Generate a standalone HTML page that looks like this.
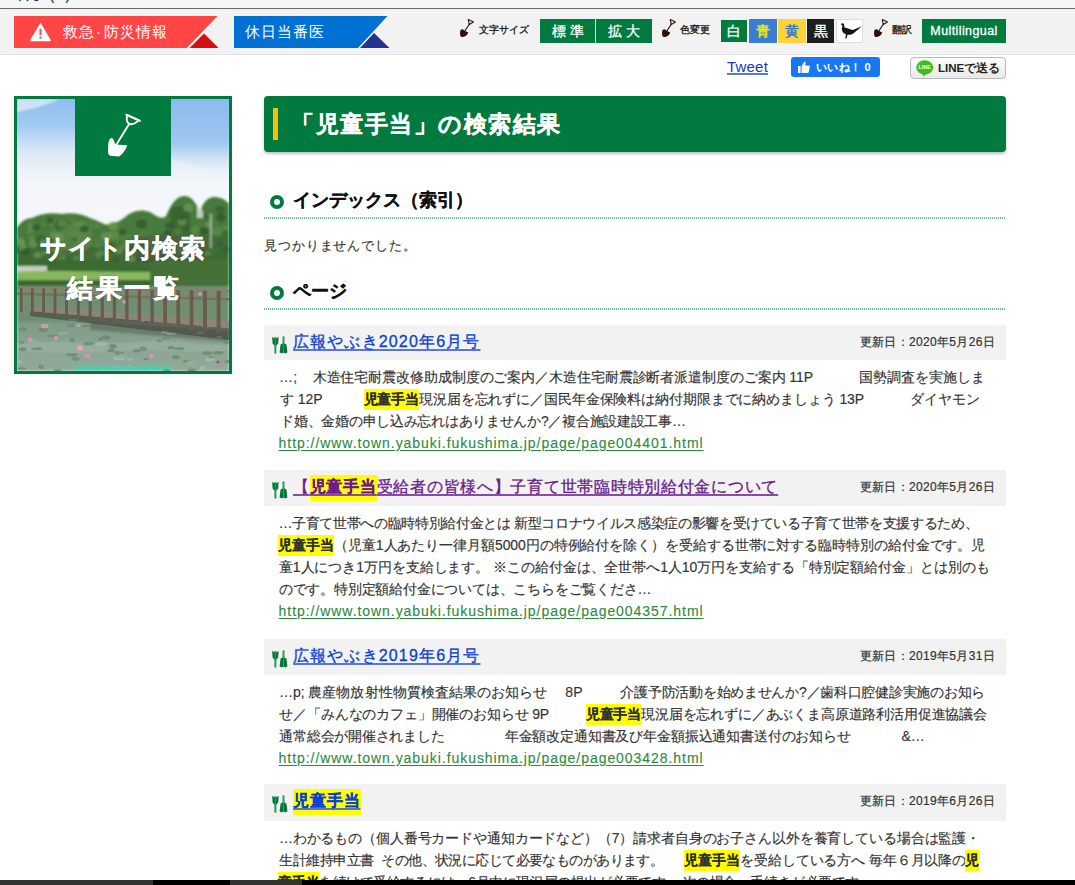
<!DOCTYPE html>
<html lang="ja"><head><meta charset="utf-8"><title>サイト内検索結果一覧</title>
<style>
*{box-sizing:border-box;margin:0;padding:0}
html,body{width:1075px;height:885px;overflow:hidden;background:#fff}
body{position:relative;font-family:"Liberation Sans",sans-serif;color:#333;font-size:14px}
.abs{position:absolute}
#topstrip{left:0;top:0;width:1075px;height:8px;background:#f6f6f6;overflow:hidden}
#topstrip span{position:absolute;left:20px;top:-12px;font-size:14px;color:#1d2a4a;white-space:nowrap}
#topline{left:0;top:8px;width:1075px;height:1px;background:#6a6a6a}
#toolbar{left:0;top:9px;width:1075px;height:46px;background:#f2f2f2;border-bottom:1px solid #dfe1e6}
.band{top:16px;height:32px}
.band .t{position:absolute;top:0;height:32px;line-height:32px;color:#fff;font-size:15px;letter-spacing:1px;white-space:nowrap}
.gbtn{position:absolute;background:#007a3e;color:#fff;text-align:center;white-space:nowrap}
.lbl{position:absolute;top:25px;font-size:10px;color:#111;white-space:nowrap;line-height:10px;-webkit-text-stroke:0.3px #111}
.shv{position:absolute;top:19px;width:15px;height:18px}

#tweet{left:727px;top:58px;font-size:15px;color:#1438d0;text-decoration:underline;text-decoration-color:#5a78d8;text-decoration-thickness:2px;white-space:nowrap;letter-spacing:0.2px}
#fb{left:791px;top:57px;width:89px;height:20px;background:#1877f2;border-radius:3px;color:#fff;font-size:11px;font-weight:bold;white-space:nowrap}
#fb span{position:absolute;left:25px;top:3px;line-height:14px;letter-spacing:0.3px}
#line{left:910px;top:57px;width:96px;height:22px;border:1px solid #b9b9b9;border-radius:4px;background:linear-gradient(#fdfdfd,#e9e9e9);font-size:11.5px;font-weight:bold;color:#222;white-space:nowrap}
#line span{position:absolute;left:27px;top:4px;line-height:13px}

#ttl{left:264px;top:96px;width:742px;height:56px;background:#007a3e;border-radius:4px;box-shadow:0 2px 3px rgba(0,0,0,.25)}
#ttl i{position:absolute;left:9px;top:12px;width:5px;height:32px;background:#fcbf00}
#ttl span{position:absolute;left:27px;top:14px;font-size:23px;line-height:28px;font-weight:bold;color:#fff;white-space:nowrap;letter-spacing:1.5px;-webkit-text-stroke:0.35px #fff}
.h2{position:absolute;left:264px;width:742px;height:30px}
.h2:after{content:"";position:absolute;left:0;bottom:0;width:742px;height:2px;background:repeating-linear-gradient(90deg,#6db494 0 1px,#fff 1px 2px)}
.h2 i{position:absolute;left:6px;top:6px;width:14px;height:14px;border:4px solid #007a3e;border-radius:50%}
.h2 span{position:absolute;left:29px;top:0;font-size:18px;line-height:22px;font-weight:bold;color:#111;white-space:nowrap;-webkit-text-stroke:0.25px #111}

.ih{position:absolute;left:264px;width:742px;background:#f2f2f2}
.ih .ico{position:absolute;left:7px;top:11px}
.it{position:absolute;left:29px;top:6px;font-size:16px;line-height:22px;color:#0b3fd6;text-decoration:underline;text-decoration-color:#5577dd;text-decoration-thickness:2px;text-underline-offset:2px;white-space:nowrap;-webkit-text-stroke:0.3px currentColor}
.it.vis{color:#6a1a8a;text-decoration-color:#8a4aa8}
.it .hl{font-weight:bold;background:#ffff00;padding:3px 0 6px;color:inherit}
.dt{position:absolute;right:11px;top:6px;font-size:12px;line-height:22px;color:#333;white-space:nowrap;letter-spacing:0.33px;-webkit-text-stroke:0.2px #333}
.sl{position:absolute;font-size:14px;line-height:22px;color:#333;white-space:nowrap;-webkit-text-stroke:0.15px #333}
.sl .hl{font-weight:bold;background:#ffff00;color:#222;padding:2px 0 3px}
.lk{color:#2a8a3e;text-decoration:underline;text-underline-offset:2px;-webkit-text-stroke:0.1px #2a8a3e}
</style></head><body>

<div id="topstrip" class="abs"><span style="left:18px">ｱｸｾ</span><span style="left:49px;font-size:16px;top:-14px;letter-spacing:1px">(?)</span></div>
<div id="topline" class="abs"></div>
<div id="toolbar" class="abs"></div>

<!-- red band -->
<svg class="abs" style="left:14px;top:16px" width="206" height="32" viewBox="0 0 206 32">
  <polygon points="0,0 203.5,0 172.8,32 0,32" fill="#ff4545"/>
  <polygon points="190,17.4 204.6,32 175.6,32" fill="#d30f0f"/>
  <polygon points="17,24.4 26.5,8.2 36,24.4" fill="#fff" stroke="#fff" stroke-width="1.6" stroke-linejoin="round"/>
  <rect x="25.5" y="12.8" width="2" height="6.4" fill="#ff4545"/>
  <rect x="25.5" y="20.6" width="2" height="2" fill="#ff4545"/>
</svg>
<div class="abs band" style="left:63px;width:120px"><div class="t" style="left:0">救急<span style="margin:0 2px 0 1px">·</span>防災情報</div></div>

<!-- blue band -->
<svg class="abs" style="left:234px;top:16px" width="158" height="32" viewBox="0 0 158 32">
  <polygon points="0,0 153.5,0 124,32 0,32" fill="#0070d2"/>
  <polygon points="140,17 155.5,32 126,32" fill="#26328f"/>
</svg>
<div class="abs band" style="left:245px;width:100px"><div class="t" style="left:0">休日当番医</div></div>

<!-- shovel icons + labels -->
<svg class="shv" style="left:459px" viewBox="0 0 15 18"><use href="#shovel"/></svg>
<div class="lbl" style="left:479px">文字サイズ</div>
<div class="gbtn" style="left:540px;top:19px;width:55px;height:24px;line-height:24px;font-size:14px;letter-spacing:4px;text-indent:4px;-webkit-text-stroke:0.3px #fff">標準</div>
<div class="gbtn" style="left:596px;top:19px;width:56px;height:24px;line-height:24px;font-size:14px;letter-spacing:4px;text-indent:4px;-webkit-text-stroke:0.3px #fff">拡大</div>
<svg class="shv" style="left:661px" viewBox="0 0 15 18"><use href="#shovel"/></svg>
<div class="lbl" style="left:680px">色変更</div>
<div class="gbtn" style="left:721px;top:20px;width:26px;height:22px;line-height:22px;font-size:14px;-webkit-text-stroke:0.35px currentColor">白</div>
<div class="gbtn" style="left:749px;top:19px;width:28px;height:24px;line-height:24px;font-size:14px;background:#3b7dd1;color:#f4f000;-webkit-text-stroke:0.35px currentColor">青</div>
<div class="gbtn" style="left:778px;top:19px;width:28px;height:24px;line-height:24px;font-size:14px;background:#fdd33a;color:#2f6fc4;-webkit-text-stroke:0.35px currentColor">黄</div>
<div class="gbtn" style="left:807px;top:19px;width:27px;height:24px;line-height:24px;font-size:14px;background:#1e1e1e;color:#fff;-webkit-text-stroke:0.35px currentColor">黒</div>
<div class="abs" style="left:836px;top:19px;width:27px;height:24px;background:#fff;border:1px solid #ddd"></div>
<svg class="abs" style="left:838px;top:22px" width="24" height="18" viewBox="0 0 24 18">
  <path d="M3,2.4 C3.4,1.2 5.2,0.8 6,2.2 C6.4,3.2 6.2,4.5 6.6,5.6 C9,6.2 12.5,7.5 15,8 C18,6.8 21,5.2 24,4.2 C21.5,6.2 18.5,8.5 16,11 C14.5,12.4 11.5,13 9.5,12.8 L8.7,16.2 L7.2,16.4 L8,12.4 C5.5,11.5 3.8,9.5 3.8,7 C3.8,5.6 4.5,4.8 4.3,3.6 C4,3 3.6,2.8 3,2.4 Z" fill="#151515"/>
</svg>
<svg class="shv" style="left:873px" viewBox="0 0 15 18"><use href="#shovel"/></svg>
<div class="lbl" style="left:892px">翻訳</div>
<div class="gbtn" style="left:922px;top:19px;width:84px;height:24px;line-height:24px;font-size:12.5px;letter-spacing:0.4px;-webkit-text-stroke:0.3px #fff">Multilingual</div>

<div id="tweet" class="abs">Tweet</div>
<div id="fb" class="abs">
 <svg style="position:absolute;left:7px;top:4px" width="12" height="12" viewBox="0 0 12 12"><rect x="0" y="5" width="2.6" height="7" fill="#fff"/><path d="M3.6,5.2 L6,1.2 C6.4,0.4 7.6,0.6 7.6,1.6 L7.2,4.4 L10.8,4.4 C11.6,4.4 12,5 11.8,5.8 L10.8,11 C10.6,11.6 10.2,12 9.6,12 L3.6,12 Z" fill="#fff"/></svg>
 <span>いいね！ 0</span></div>
<div id="line" class="abs">
 <svg style="position:absolute;left:5px;top:2px" width="18" height="17" viewBox="0 0 18 17"><ellipse cx="8.7" cy="7.5" rx="8.5" ry="7.2" fill="#3cbf1a"/><path d="M6,13 L7.5,16.5 L10.5,13.5 Z" fill="#3cbf1a"/><text x="8.7" y="9.3" font-size="5.5" font-weight="bold" fill="#fff" text-anchor="middle" font-family="Liberation Sans">LINE</text></svg>
 <span>LINEで送る</span></div>

<!-- side panel -->
<div class="abs" style="left:14px;top:96px;width:218px;height:278px;background:#007a3e;box-shadow:0 0 1px rgba(0,0,0,.2)"></div>
<svg class="abs" style="left:17px;top:99px" width="212" height="272" viewBox="17 99 212 272">
 <defs>
  <linearGradient id="sky" x1="0" y1="0" x2="0" y2="1">
   <stop offset="0" stop-color="#8dbdee"/><stop offset="0.1" stop-color="#a3cbf2"/><stop offset="0.2" stop-color="#dde9f6"/><stop offset="0.3" stop-color="#f3f6fa"/><stop offset="0.6" stop-color="#f6f8fa"/><stop offset="1" stop-color="#e8eef4"/>
  </linearGradient>
  <linearGradient id="skyR" x1="0" y1="0" x2="0" y2="1">
   <stop offset="0" stop-color="#8bbbee" stop-opacity="1"/><stop offset="0.6" stop-color="#9cc6f0" stop-opacity=".9"/><stop offset="1" stop-color="#c9def4" stop-opacity="0"/>
  </linearGradient>
  <linearGradient id="pond" x1="0" y1="0" x2="0" y2="1">
   <stop offset="0" stop-color="#7f9c86"/><stop offset="1" stop-color="#93aa9b"/>
  </linearGradient>
  <filter id="bl" x="-10%" y="-10%" width="120%" height="120%"><feGaussianBlur stdDeviation="1.3"/></filter>
  <pattern id="dash" x="75" y="0" width="9.6" height="10" patternUnits="userSpaceOnUse"><rect width="8" height="10" fill="#22dfb8"/><rect x="8" width="1.6" height="10" fill="#7fc0a8"/></pattern>
  <filter id="bl2"><feGaussianBlur stdDeviation="0.55"/></filter>
 </defs>
 <rect x="17" y="99" width="212" height="272" fill="url(#sky)"/>
 <g filter="url(#bl)">
  <path d="M150,99 L229,99 L229,172 C200,168 170,160 150,150 Z" fill="url(#skyR)"/>
  <path d="M17,99 L60,99 C50,104 30,110 17,112 Z" fill="#dfeaf6" opacity=".8"/>
  <!-- trees -->
  <path d="M17,228 C20,222 26,218 32,218 C40,214 50,212 62,214 C72,212 82,214 90,218 C96,220 100,222 104,224 C110,226 118,222 124,218 C130,212 140,208 150,212 C156,216 162,220 166,216 C170,206 176,196 184,196 C192,196 196,204 200,210 C204,202 208,196 216,197 C222,198 226,200 229,204 L229,371 L17,371 Z" fill="#4a7a3d"/>
  <path d="M17,240 C30,236 40,244 50,242 C70,240 90,250 110,246 C130,242 150,236 170,232 C190,228 210,232 229,230 L229,371 L17,371 Z" fill="#3f6c36"/>
  <path d="M60,224 C70,218 84,220 90,230 C94,238 92,246 86,250 L60,250 Z" fill="#5e8c49" opacity=".7"/>
  <path d="M170,210 C176,204 186,204 190,214 L190,232 L170,232 Z" fill="#365f30" opacity=".8"/>
  <g><ellipse cx="112.9" cy="245.9" rx="5.7" ry="4.6" fill="#385f31" opacity=".75"/><ellipse cx="112.8" cy="256.7" rx="3.2" ry="2.5" fill="#557f45" opacity=".75"/><ellipse cx="117.9" cy="247.3" rx="3.2" ry="2.5" fill="#385f31" opacity=".75"/><ellipse cx="81.3" cy="224.5" rx="5.3" ry="4.3" fill="#5f8f4b" opacity=".75"/><ellipse cx="143.2" cy="235.2" rx="4.1" ry="3.3" fill="#557f45" opacity=".75"/><ellipse cx="154.8" cy="245.1" rx="5.4" ry="4.3" fill="#5f8f4b" opacity=".75"/><ellipse cx="29.6" cy="230.9" rx="3.3" ry="2.7" fill="#5f8f4b" opacity=".75"/><ellipse cx="182.0" cy="221.8" rx="4.6" ry="3.7" fill="#6a9852" opacity=".75"/><ellipse cx="127.1" cy="247.4" rx="4.2" ry="3.4" fill="#5f8f4b" opacity=".75"/><ellipse cx="114.0" cy="235.3" rx="6.0" ry="4.8" fill="#5f8f4b" opacity=".75"/><ellipse cx="167.1" cy="232.4" rx="3.3" ry="2.6" fill="#2e5629" opacity=".75"/><ellipse cx="23.3" cy="247.1" rx="2.9" ry="2.3" fill="#5f8f4b" opacity=".75"/><ellipse cx="196.5" cy="230.7" rx="5.9" ry="4.7" fill="#5f8f4b" opacity=".75"/><ellipse cx="62.3" cy="258.8" rx="2.7" ry="2.1" fill="#385f31" opacity=".75"/><ellipse cx="224.8" cy="228.1" rx="2.8" ry="2.2" fill="#6a9852" opacity=".75"/><ellipse cx="182.0" cy="218.3" rx="2.8" ry="2.2" fill="#2e5629" opacity=".75"/><ellipse cx="20.2" cy="243.0" rx="5.7" ry="4.6" fill="#6a9852" opacity=".75"/><ellipse cx="69.2" cy="223.4" rx="2.7" ry="2.2" fill="#385f31" opacity=".75"/><ellipse cx="54.7" cy="243.0" rx="4.1" ry="3.3" fill="#6a9852" opacity=".75"/><ellipse cx="225.9" cy="249.2" rx="4.0" ry="3.2" fill="#385f31" opacity=".75"/><ellipse cx="41.7" cy="238.1" rx="3.2" ry="2.6" fill="#2e5629" opacity=".75"/><ellipse cx="200.2" cy="260.8" rx="4.6" ry="3.7" fill="#5f8f4b" opacity=".75"/><ellipse cx="61.7" cy="235.4" rx="5.5" ry="4.4" fill="#557f45" opacity=".75"/><ellipse cx="38.3" cy="261.6" rx="3.2" ry="2.6" fill="#2e5629" opacity=".75"/><ellipse cx="19.0" cy="249.8" rx="5.4" ry="4.3" fill="#385f31" opacity=".75"/><ellipse cx="32.6" cy="225.5" rx="4.5" ry="3.6" fill="#6a9852" opacity=".75"/><ellipse cx="20.3" cy="241.7" rx="4.7" ry="3.7" fill="#6a9852" opacity=".75"/><ellipse cx="220.3" cy="231.7" rx="4.5" ry="3.6" fill="#385f31" opacity=".75"/><ellipse cx="55.8" cy="225.5" rx="5.7" ry="4.5" fill="#557f45" opacity=".75"/><ellipse cx="69.9" cy="227.3" rx="5.1" ry="4.1" fill="#557f45" opacity=".75"/><ellipse cx="58.7" cy="259.8" rx="5.6" ry="4.5" fill="#557f45" opacity=".75"/><ellipse cx="33.6" cy="223.7" rx="2.9" ry="2.3" fill="#557f45" opacity=".75"/><ellipse cx="221.1" cy="217.6" rx="5.0" ry="4.0" fill="#2e5629" opacity=".75"/><ellipse cx="106.2" cy="258.7" rx="4.2" ry="3.4" fill="#557f45" opacity=".75"/><ellipse cx="54.2" cy="250.0" rx="2.7" ry="2.2" fill="#6a9852" opacity=".75"/><ellipse cx="118.6" cy="248.7" rx="4.7" ry="3.7" fill="#5f8f4b" opacity=".75"/><ellipse cx="76.4" cy="258.5" rx="3.2" ry="2.6" fill="#5f8f4b" opacity=".75"/><ellipse cx="31.7" cy="238.6" rx="3.4" ry="2.7" fill="#5f8f4b" opacity=".75"/><ellipse cx="54.4" cy="234.9" rx="4.5" ry="3.6" fill="#6a9852" opacity=".75"/><ellipse cx="36.5" cy="227.0" rx="4.1" ry="3.3" fill="#2e5629" opacity=".75"/><ellipse cx="156.3" cy="248.3" rx="4.5" ry="3.6" fill="#6a9852" opacity=".75"/><ellipse cx="142.1" cy="258.6" rx="4.2" ry="3.3" fill="#2e5629" opacity=".75"/><ellipse cx="165.6" cy="260.4" rx="2.6" ry="2.1" fill="#5f8f4b" opacity=".75"/><ellipse cx="119.2" cy="251.6" rx="3.6" ry="2.9" fill="#5f8f4b" opacity=".75"/><ellipse cx="33.0" cy="243.8" rx="5.1" ry="4.1" fill="#6a9852" opacity=".75"/><ellipse cx="185.2" cy="256.8" rx="3.7" ry="3.0" fill="#385f31" opacity=".75"/><ellipse cx="208.0" cy="255.0" rx="4.0" ry="3.2" fill="#5f8f4b" opacity=".75"/><ellipse cx="200.1" cy="241.5" rx="4.7" ry="3.7" fill="#385f31" opacity=".75"/><ellipse cx="97.4" cy="225.6" rx="2.8" ry="2.2" fill="#5f8f4b" opacity=".75"/><ellipse cx="152.6" cy="261.7" rx="5.6" ry="4.5" fill="#2e5629" opacity=".75"/><ellipse cx="99.3" cy="252.5" rx="4.5" ry="3.6" fill="#385f31" opacity=".75"/><ellipse cx="115.1" cy="244.9" rx="4.3" ry="3.5" fill="#557f45" opacity=".75"/><ellipse cx="23.3" cy="248.4" rx="4.2" ry="3.3" fill="#6a9852" opacity=".75"/><ellipse cx="220.0" cy="209.8" rx="5.2" ry="4.2" fill="#385f31" opacity=".75"/><ellipse cx="71.2" cy="219.8" rx="3.6" ry="2.8" fill="#557f45" opacity=".75"/><ellipse cx="59.9" cy="225.7" rx="5.7" ry="4.5" fill="#385f31" opacity=".75"/><ellipse cx="122.6" cy="232.0" rx="3.9" ry="3.1" fill="#2e5629" opacity=".75"/><ellipse cx="59.1" cy="237.2" rx="5.3" ry="4.3" fill="#6a9852" opacity=".75"/><ellipse cx="203.6" cy="230.6" rx="4.5" ry="3.6" fill="#2e5629" opacity=".75"/><ellipse cx="61.5" cy="224.0" rx="3.7" ry="3.0" fill="#5f8f4b" opacity=".75"/><ellipse cx="167.8" cy="259.8" rx="3.5" ry="2.8" fill="#6a9852" opacity=".75"/><ellipse cx="40.9" cy="240.2" rx="5.7" ry="4.6" fill="#385f31" opacity=".75"/><ellipse cx="98.1" cy="244.5" rx="4.9" ry="3.9" fill="#557f45" opacity=".75"/><ellipse cx="112.9" cy="228.1" rx="2.6" ry="2.1" fill="#557f45" opacity=".75"/><ellipse cx="25.8" cy="251.6" rx="4.5" ry="3.6" fill="#2e5629" opacity=".75"/><ellipse cx="154.6" cy="242.5" rx="4.7" ry="3.8" fill="#385f31" opacity=".75"/><ellipse cx="113.4" cy="226.1" rx="5.4" ry="4.3" fill="#6a9852" opacity=".75"/><ellipse cx="182.2" cy="249.8" rx="5.9" ry="4.8" fill="#5f8f4b" opacity=".75"/><ellipse cx="111.7" cy="248.6" rx="4.8" ry="3.8" fill="#2e5629" opacity=".75"/><ellipse cx="220.2" cy="243.5" rx="3.2" ry="2.6" fill="#385f31" opacity=".75"/><ellipse cx="71.3" cy="249.8" rx="5.1" ry="4.1" fill="#557f45" opacity=".75"/><ellipse cx="168.4" cy="225.3" rx="3.5" ry="2.8" fill="#2e5629" opacity=".75"/><ellipse cx="131.4" cy="259.8" rx="4.3" ry="3.4" fill="#6a9852" opacity=".75"/><ellipse cx="100.4" cy="254.6" rx="5.7" ry="4.5" fill="#5f8f4b" opacity=".75"/><ellipse cx="104.0" cy="258.3" rx="3.9" ry="3.1" fill="#385f31" opacity=".75"/><ellipse cx="113.1" cy="248.2" rx="5.7" ry="4.5" fill="#385f31" opacity=".75"/><ellipse cx="133.6" cy="247.3" rx="4.3" ry="3.4" fill="#2e5629" opacity=".75"/><ellipse cx="115.3" cy="249.0" rx="3.2" ry="2.6" fill="#5f8f4b" opacity=".75"/><ellipse cx="62.2" cy="257.6" rx="5.9" ry="4.7" fill="#2e5629" opacity=".75"/><ellipse cx="130.8" cy="253.3" rx="3.6" ry="2.9" fill="#5f8f4b" opacity=".75"/><ellipse cx="90.9" cy="225.7" rx="4.0" ry="3.2" fill="#557f45" opacity=".75"/><ellipse cx="106.3" cy="236.8" rx="5.7" ry="4.6" fill="#6a9852" opacity=".75"/><ellipse cx="188.5" cy="207.7" rx="5.3" ry="4.2" fill="#6a9852" opacity=".75"/><ellipse cx="130.0" cy="249.0" rx="5.7" ry="4.6" fill="#385f31" opacity=".75"/><ellipse cx="48.5" cy="241.6" rx="5.0" ry="4.0" fill="#385f31" opacity=".75"/><ellipse cx="217.5" cy="231.5" rx="5.8" ry="4.7" fill="#5f8f4b" opacity=".75"/><ellipse cx="177.7" cy="231.2" rx="4.5" ry="3.6" fill="#557f45" opacity=".75"/><ellipse cx="152.4" cy="240.3" rx="5.5" ry="4.4" fill="#557f45" opacity=".75"/><ellipse cx="71.4" cy="248.0" rx="5.8" ry="4.7" fill="#557f45" opacity=".75"/><ellipse cx="61.1" cy="255.5" rx="5.9" ry="4.7" fill="#557f45" opacity=".75"/><ellipse cx="74.9" cy="240.8" rx="3.9" ry="3.2" fill="#5f8f4b" opacity=".75"/><ellipse cx="123.7" cy="246.2" rx="2.6" ry="2.1" fill="#5f8f4b" opacity=".75"/><ellipse cx="126.4" cy="237.7" rx="5.3" ry="4.2" fill="#557f45" opacity=".75"/><ellipse cx="42.8" cy="224.4" rx="3.1" ry="2.5" fill="#557f45" opacity=".75"/><ellipse cx="114.3" cy="259.1" rx="5.3" ry="4.2" fill="#385f31" opacity=".75"/><ellipse cx="74.1" cy="239.7" rx="2.9" ry="2.4" fill="#385f31" opacity=".75"/><ellipse cx="208.0" cy="258.5" rx="5.7" ry="4.6" fill="#557f45" opacity=".75"/><ellipse cx="84.2" cy="229.0" rx="4.7" ry="3.7" fill="#2e5629" opacity=".75"/><ellipse cx="44.4" cy="252.8" rx="2.6" ry="2.1" fill="#6a9852" opacity=".75"/><ellipse cx="50.0" cy="220.1" rx="3.5" ry="2.8" fill="#2e5629" opacity=".75"/><ellipse cx="68.8" cy="240.4" rx="4.2" ry="3.4" fill="#557f45" opacity=".75"/><ellipse cx="43.0" cy="241.7" rx="3.4" ry="2.7" fill="#6a9852" opacity=".75"/><ellipse cx="165.7" cy="256.9" rx="2.6" ry="2.1" fill="#385f31" opacity=".75"/><ellipse cx="191.9" cy="240.8" rx="4.4" ry="3.5" fill="#557f45" opacity=".75"/><ellipse cx="152.4" cy="240.6" rx="5.5" ry="4.4" fill="#557f45" opacity=".75"/><ellipse cx="141.4" cy="224.0" rx="5.7" ry="4.6" fill="#2e5629" opacity=".75"/><ellipse cx="208.4" cy="224.5" rx="3.6" ry="2.9" fill="#6a9852" opacity=".75"/><ellipse cx="63.2" cy="261.9" rx="5.6" ry="4.5" fill="#6a9852" opacity=".75"/><ellipse cx="205.5" cy="216.5" rx="2.8" ry="2.2" fill="#385f31" opacity=".75"/><ellipse cx="37.6" cy="255.2" rx="4.0" ry="3.2" fill="#6a9852" opacity=".75"/></g>
  <path d="M197,200 C199,204 201,208 203,212 L203,218 L197,218 Z" fill="#eef3f6" opacity=".7"/>
  <rect x="210" y="214" width="1.6" height="34" fill="#c9cfc6" opacity=".8"/>
  <rect x="135" y="236" width="70" height="26" fill="#4c5450" opacity=".55"/>
  <path d="M17,258 C40,256 80,262 120,262 C160,262 200,256 229,254 L229,371 L17,371 Z" fill="#3b6a32"/>
  <rect x="17" y="266" width="30" height="6" fill="#c8ccbf"/>
  <path d="M17,272 C50,270 100,272 150,272 L150,280 L17,280 Z" fill="#86b85c"/>
  <path d="M17,280 L229,280 L229,286 L17,286 Z" fill="#3e6636"/>
  <path d="M150,262 C180,258 210,262 229,258 L229,286 L150,286 Z" fill="#446f38"/>
  <path d="M17,286 L229,286 L229,330 L17,330 Z" fill="#6f8f6f"/>
  <!-- pond -->
  <rect x="17" y="322" width="212" height="49" fill="url(#pond)"/>
  <path d="M17,344 C60,338 100,346 140,342 C180,338 210,348 229,344 L229,350 C190,354 150,348 110,352 C70,356 40,350 17,352 Z" fill="#a0b6a9" opacity=".55"/>
  <path d="M90,322 L229,330 L229,342 L90,330 Z" fill="#3c3a36" opacity=".35"/>
 </g>
 <g filter="url(#bl2)">
  <g opacity=".8"><ellipse cx="85.7" cy="326.0" rx="4.6" ry="1.1" fill="#6b8a66"/><ellipse cx="37.0" cy="348.9" rx="5.6" ry="1.3" fill="#6f8c78"/><ellipse cx="108.9" cy="321.7" rx="2.4" ry="1.6" fill="#6b8a66"/><ellipse cx="43.2" cy="329.8" rx="4.5" ry="2.4" fill="#6b8a66"/><ellipse cx="141.1" cy="320.6" rx="2.9" ry="1.8" fill="#a7bbb0"/><ellipse cx="78.4" cy="325.6" rx="2.5" ry="1.5" fill="#a7bbb0"/><ellipse cx="38.8" cy="348.3" rx="2.8" ry="1.1" fill="#6f8c78"/><ellipse cx="136.6" cy="350.8" rx="4.0" ry="1.8" fill="#6d8a74"/><ellipse cx="115.7" cy="366.9" rx="3.4" ry="1.4" fill="#a7bbb0"/><ellipse cx="165.2" cy="330.9" rx="4.3" ry="1.8" fill="#6d8a74"/><ellipse cx="171.6" cy="333.3" rx="5.9" ry="1.2" fill="#98ae9f"/><ellipse cx="52.0" cy="336.1" rx="5.7" ry="1.6" fill="#6f8c78"/><ellipse cx="179.1" cy="348.4" rx="5.5" ry="1.5" fill="#6d8a74"/><ellipse cx="143.0" cy="348.7" rx="3.8" ry="2.3" fill="#6d8a74"/><ellipse cx="117.5" cy="353.2" rx="2.2" ry="2.1" fill="#6b8a66"/><ellipse cx="227.5" cy="361.6" rx="3.1" ry="1.6" fill="#6d8a74"/><ellipse cx="21.8" cy="342.5" rx="2.7" ry="1.2" fill="#6f8c78"/><ellipse cx="63.3" cy="333.2" rx="5.0" ry="1.6" fill="#98ae9f"/><ellipse cx="34.1" cy="341.8" rx="4.2" ry="2.3" fill="#98ae9f"/><ellipse cx="200.2" cy="332.8" rx="3.7" ry="1.5" fill="#98ae9f"/><ellipse cx="220.0" cy="326.0" rx="2.7" ry="1.3" fill="#a7bbb0"/><ellipse cx="19.6" cy="362.0" rx="2.7" ry="1.4" fill="#a7bbb0"/><ellipse cx="105.8" cy="337.6" rx="4.3" ry="2.4" fill="#6b8a66"/><ellipse cx="218.4" cy="352.7" rx="5.0" ry="1.7" fill="#6b8a66"/><ellipse cx="100.2" cy="339.1" rx="2.4" ry="2.0" fill="#6f8c78"/><ellipse cx="57.4" cy="370.2" rx="3.8" ry="1.2" fill="#6b8a66"/><ellipse cx="28.1" cy="318.0" rx="2.6" ry="1.2" fill="#6d8a74"/><ellipse cx="147.1" cy="321.7" rx="2.8" ry="1.6" fill="#6d8a74"/><ellipse cx="219.6" cy="349.9" rx="3.9" ry="1.2" fill="#98ae9f"/><ellipse cx="227.5" cy="342.7" rx="3.9" ry="1.1" fill="#6f8c78"/><ellipse cx="175.9" cy="357.2" rx="3.9" ry="2.0" fill="#6b8a66"/><ellipse cx="21.9" cy="368.4" rx="4.1" ry="1.2" fill="#6b8a66"/><ellipse cx="210.8" cy="358.2" rx="3.2" ry="2.0" fill="#6f8c78"/><ellipse cx="164.6" cy="331.8" rx="3.5" ry="1.3" fill="#a7bbb0"/><ellipse cx="129.9" cy="359.3" rx="3.3" ry="1.3" fill="#a7bbb0"/><ellipse cx="187.9" cy="361.4" rx="5.0" ry="1.3" fill="#6b8a66"/><ellipse cx="121.5" cy="356.7" rx="6.0" ry="2.2" fill="#98ae9f"/><ellipse cx="71.9" cy="354.7" rx="5.8" ry="1.7" fill="#6d8a74"/><ellipse cx="219.5" cy="337.3" rx="2.9" ry="1.3" fill="#a7bbb0"/><ellipse cx="88.6" cy="343.6" rx="5.9" ry="1.9" fill="#6f8c78"/><ellipse cx="118.6" cy="352.6" rx="5.2" ry="1.1" fill="#6f8c78"/><ellipse cx="209.9" cy="359.5" rx="5.0" ry="1.7" fill="#a7bbb0"/><ellipse cx="109.0" cy="351.7" rx="2.3" ry="2.4" fill="#98ae9f"/><ellipse cx="115.2" cy="357.4" rx="2.3" ry="1.2" fill="#a7bbb0"/><ellipse cx="22.8" cy="349.3" rx="3.9" ry="2.0" fill="#6b8a66"/><ellipse cx="192.2" cy="370.0" rx="4.6" ry="1.5" fill="#6b8a66"/><ellipse cx="133.2" cy="319.1" rx="5.2" ry="2.1" fill="#6f8c78"/><ellipse cx="128.6" cy="367.5" rx="3.7" ry="2.3" fill="#a7bbb0"/><ellipse cx="22.9" cy="329.3" rx="4.0" ry="2.1" fill="#6d8a74"/><ellipse cx="72.0" cy="340.2" rx="2.5" ry="2.4" fill="#6d8a74"/><ellipse cx="207.3" cy="353.1" rx="5.3" ry="1.8" fill="#6b8a66"/><ellipse cx="44.7" cy="326.0" rx="4.0" ry="2.3" fill="#a7bbb0"/><ellipse cx="146.0" cy="359.1" rx="2.6" ry="1.2" fill="#6b8a66"/><ellipse cx="170.7" cy="347.5" rx="3.3" ry="1.8" fill="#6b8a66"/><ellipse cx="119.3" cy="359.2" rx="5.5" ry="1.1" fill="#a7bbb0"/><ellipse cx="75.7" cy="358.9" rx="4.0" ry="1.8" fill="#6f8c78"/><ellipse cx="111.0" cy="350.5" rx="4.0" ry="1.8" fill="#6d8a74"/><ellipse cx="112.9" cy="346.3" rx="3.9" ry="2.4" fill="#6b8a66"/><ellipse cx="202.8" cy="367.9" rx="3.0" ry="1.8" fill="#a7bbb0"/><ellipse cx="195.1" cy="325.3" rx="2.5" ry="1.7" fill="#6f8c78"/><ellipse cx="159.3" cy="340.7" rx="2.9" ry="1.5" fill="#6f8c78"/><ellipse cx="207.2" cy="326.2" rx="4.9" ry="2.0" fill="#a7bbb0"/><ellipse cx="70.7" cy="325.3" rx="3.9" ry="2.1" fill="#6f8c78"/><ellipse cx="101.4" cy="343.8" rx="6.0" ry="2.2" fill="#a7bbb0"/><ellipse cx="166.7" cy="370.7" rx="3.6" ry="1.6" fill="#6d8a74"/><ellipse cx="84.5" cy="356.3" rx="2.1" ry="1.8" fill="#98ae9f"/><ellipse cx="166.1" cy="338.4" rx="4.1" ry="1.4" fill="#6f8c78"/><ellipse cx="40.9" cy="366.7" rx="2.9" ry="2.3" fill="#6f8c78"/><ellipse cx="73.3" cy="320.1" rx="5.1" ry="1.4" fill="#a7bbb0"/><ellipse cx="190.8" cy="363.0" rx="4.7" ry="2.4" fill="#98ae9f"/></g>
  <path d="M30,311 L229,328 L229,340 L30,316 Z" fill="#3e3c37" opacity=".55"/>
  <path d="M17,287 L229,290 L229,292.6 L17,289.6 Z" fill="#8f7d6a"/>
  <path d="M17,292.5 L229,298 L229,300.6 L17,295.1 Z" fill="#7f6e5d"/>
  <path d="M30,305.5 L229,321 L229,328 L30,311 Z" fill="#8b8478"/>
  <g fill="#6a5b4e"><rect x="20.0" y="288.0" width="2.6" height="24.3"/><rect x="31.0" y="288.2" width="2.7" height="25.3"/><rect x="42.2" y="288.4" width="2.8" height="26.3"/><rect x="53.6" y="288.5" width="2.8" height="27.3"/><rect x="65.1" y="288.7" width="2.9" height="28.3"/><rect x="76.8" y="288.8" width="3.0" height="29.4"/><rect x="88.6" y="289.0" width="3.1" height="30.4"/><rect x="100.7" y="289.2" width="3.2" height="31.5"/><rect x="112.8" y="289.4" width="3.2" height="32.6"/><rect x="125.2" y="289.5" width="3.3" height="33.7"/><rect x="137.7" y="289.7" width="3.4" height="34.8"/><rect x="150.4" y="289.9" width="3.5" height="36.0"/><rect x="163.3" y="290.1" width="3.6" height="37.1"/><rect x="176.4" y="290.3" width="3.7" height="38.3"/><rect x="189.7" y="290.4" width="3.7" height="39.5"/><rect x="203.1" y="290.6" width="3.8" height="40.7"/><rect x="216.7" y="290.8" width="3.9" height="41.9"/></g>
  <circle cx="30" cy="340" r="2.4" fill="#e58fb0"/><circle cx="44" cy="326" r="2" fill="#e58fb0"/><circle cx="56" cy="338" r="2" fill="#e58fb0"/>
  <circle cx="80" cy="348" r="2.8" fill="#e9a2bc"/><circle cx="88" cy="356" r="2.2" fill="#e58fb0"/><circle cx="124" cy="302" r="1.8" fill="#e58fb0"/>
  <circle cx="152" cy="356" r="2" fill="#e58fb0"/><circle cx="200" cy="294" r="1.8" fill="#e58fb0"/><circle cx="218" cy="362" r="1.6" fill="#c04060"/>
  <rect x="75" y="366.5" width="97" height="2.5" fill="url(#dash)"/>
 </g>
 <rect x="75" y="99" width="96" height="77" fill="#007a3e"/>
 <path d="M110.6,138.2 C111.6,137.6 112.6,138 113.2,139 L115.6,144.6 L127.2,145.2 C125.8,149.8 122.4,154.2 119,156.4 L110.2,155.8 C108.5,155.2 107.9,153.2 108,151 L108.3,143.5 C108.6,141.2 109.4,139.2 110.6,138.2 Z" fill="#fff"/>
 <path d="M115.6,146 L129.4,123.6" stroke="#fff" stroke-width="1.9" fill="none"/>
 <path d="M126.4,114.8 L139.8,120.8" stroke="#fff" stroke-width="2.2" fill="none" stroke-linecap="round"/>
 <path d="M127.4,115.6 C125.4,119.4 127.2,123.6 130.4,124.2 C133.6,124.6 136.6,122.4 138.6,120.4" stroke="#fff" stroke-width="1.9" fill="none"/>
</svg>
<div class="abs" style="left:17px;top:228px;width:212px;text-align:center;color:#fff;font-weight:bold;font-size:26px;line-height:40px;letter-spacing:1.2px;-webkit-text-stroke:0.5px #fff;text-shadow:0 0 2px rgba(0,0,0,.25);white-space:nowrap">サイト内検索<br><span style="letter-spacing:2.4px;margin-left:2.4px">結果一覧</span></div>

<div id="ttl" class="abs"><i></i><span>「児童手当」の検索結果</span></div>
<div class="h2" style="top:189px;height:30px"><i></i><span>インデックス（索引）</span></div>
<div class="abs" style="left:264px;top:237px;font-size:13px;line-height:18px;color:#333;white-space:nowrap;letter-spacing:0.9px;-webkit-text-stroke:0.15px #333">見つかりませんでした。</div>
<div class="h2" style="top:280px"><i></i><span>ページ</span></div>

<!--ITEMS-->
<div class="ih" style="top:325px;height:35px"><svg class="ico" width="17" height="18" viewBox="0 0 17 18"><use href="#ico"/></svg><a class="it" id="t0" style="letter-spacing:1.154px">広報やぶき2020年6月号</a><span class="dt">更新日：2020年5月26日</span></div>
<div class="sl" id="s0" style="left:279.1px;top:365.7px;letter-spacing:0.205px">…;</div>
<div class="sl" id="s1" style="left:312.6px;top:365.7px;letter-spacing:-0.089px">木造住宅耐震改修助成制度のご案内／木造住宅耐震診断者派遣制度のご案内 11P</div>
<div class="sl" id="s2" style="left:859.4px;top:365.7px;letter-spacing:-0.100px">国勢調査を実施しま</div>
<div class="sl" id="s3" style="left:279.8px;top:387.8px;letter-spacing:-0.022px">す 12P</div>
<div class="sl" id="s4" style="left:363.5px;top:387.8px;letter-spacing:-0.113px"><b class="hl">児童手当</b>現況届を忘れずに／国民年金保険料は納付期限までに納めましょう 13P</div>
<div class="sl" id="s5" style="left:909.9px;top:387.8px;letter-spacing:0.020px">ダイヤモン</div>
<div class="sl" id="s6" style="left:280.3px;top:409.9px;letter-spacing:-0.283px">ド婚、金婚の申し込み忘れはありませんか?／複合施設建設工事…</div>
<div class="sl lk" id="l0" style="left:278.6px;top:432.0px;letter-spacing:0.946px">http://www.town.yabuki.fukushima.jp/page/page004401.html</div>
<div class="ih" style="top:470px;height:36px"><svg class="ico" width="17" height="18" viewBox="0 0 17 18"><use href="#ico"/></svg><a class="it vis" id="t1" style="letter-spacing:0.728px">【<b class="hl">児童手当</b>受給者の皆様へ】子育て世帯臨時特別給付金について</a><span class="dt">更新日：2020年5月26日</span></div>
<div class="sl" id="s7" style="left:278.4px;top:511.7px;letter-spacing:-0.346px">…子育て世帯への臨時特別給付金とは 新型コロナウイルス感染症の影響を受けている子育て世帯を支援するため、</div>
<div class="sl" id="s8" style="left:278.4px;top:533.8px;letter-spacing:-0.078px"><b class="hl">児童手当</b>（児童1人あたり一律月額5000円の特例給付を除く）を受給する世帯に対する臨時特別の給付金です。児</div>
<div class="sl" id="s9" style="left:278.9px;top:555.9px;letter-spacing:-0.076px">童1人につき1万円を支給します。 ※この給付金は、全世帯へ1人10万円を支給する「特別定額給付金」とは別のも</div>
<div class="sl" id="s10" style="left:278.9px;top:578.0px;letter-spacing:-0.207px">のです。特別定額給付金については、こちらをご覧くださ…</div>
<div class="sl lk" id="l1" style="left:278.6px;top:600.1px;letter-spacing:0.946px">http://www.town.yabuki.fukushima.jp/page/page004357.html</div>
<div class="ih" style="top:639px;height:36px"><svg class="ico" width="17" height="18" viewBox="0 0 17 18"><use href="#ico"/></svg><a class="it" id="t2" style="letter-spacing:1.154px">広報やぶき2019年6月号</a><span class="dt">更新日：2019年5月31日</span></div>
<div class="sl" id="s11" style="left:278.9px;top:680.7px;letter-spacing:0.006px">…p; 農産物放射性物質検査結果のお知らせ</div>
<div class="sl" id="s12" style="left:565.2px;top:680.7px;letter-spacing:0.238px">8P</div>
<div class="sl" id="s13" style="left:620.3px;top:680.7px;letter-spacing:-0.255px">介護予防活動を始めませんか?／歯科口腔健診実施のお知ら</div>
<div class="sl" id="s14" style="left:279.4px;top:702.8px;letter-spacing:-0.163px">せ／「みんなのカフェ」開催のお知らせ 9P</div>
<div class="sl" id="s15" style="left:585.7px;top:702.8px;letter-spacing:-0.166px"><b class="hl">児童手当</b>現況届を忘れずに／あぶくま高原道路利活用促進協議会</div>
<div class="sl" id="s16" style="left:279.4px;top:724.9px;letter-spacing:-0.250px">通常総会が開催されました</div>
<div class="sl" id="s17" style="left:504.7px;top:724.9px;letter-spacing:-0.152px">年金額改定通知書及び年金額振込通知書送付のお知らせ</div>
<div class="sl" id="s18" style="left:901.4px;top:724.9px;letter-spacing:0.078px">&amp;…</div>
<div class="sl lk" id="l2" style="left:278.6px;top:747.0px;letter-spacing:0.946px">http://www.town.yabuki.fukushima.jp/page/page003428.html</div>
<div class="ih" style="top:784px;height:37px"><svg class="ico" width="17" height="18" viewBox="0 0 17 18"><use href="#ico"/></svg><a class="it" id="t3" style="letter-spacing:0.875px"><b class="hl">児童手当</b></a><span class="dt">更新日：2019年6月26日</span></div>
<div class="sl" id="s19" style="left:278.9px;top:826.7px;letter-spacing:-0.131px">…わかるもの（個人番号カードや通知カードなど）（7）請求者自身のお子さん以外を養育している場合は監護・</div>
<div class="sl" id="s20" style="left:279.4px;top:848.8px;letter-spacing:-0.543px">生計維持申立書</div>
<div class="sl" id="s21" style="left:381.3px;top:848.8px;letter-spacing:-0.571px">その他、状況に応じて必要なものがあります。</div>
<div class="sl" id="s22" style="left:684.4px;top:848.8px;letter-spacing:-0.100px"><b class="hl">児童手当</b>を受給している方へ 毎年６月以降の</div>
<div class="sl" id="s23" style="left:965.0px;top:848.8px;letter-spacing:0.000px"><b class="hl">児</b></div>
<div class="sl" id="s24" style="left:278.4px;top:870.9px;letter-spacing:-0.433px"><b class="hl">童手当</b>を続けて受給するには、6月中に現況届の提出が必要です。 次の場合、手続きが必要です。</div>
<div class="sl" id="s25" style="left:942.4px;top:870.9px;letter-spacing:0.000px">・</div>
<!--/ITEMS-->
<div class="abs" style="left:0;top:880px;width:1075px;height:5px;background:#000"></div>
<div class="abs" style="left:0;top:880px;width:153px;height:5px;background:#333"></div>
<div class="abs" style="left:230px;top:880px;width:72px;height:5px;background:#333"></div>

<svg width="0" height="0" style="position:absolute"><defs>
 <g id="ico">
  <path d="M1.2,0.8 L3.2,2.2 L4.4,0.6 L5.6,2.2 L7.6,0.8 L7.2,7.4 L5.3,9.8 L5.3,17.6 L3.5,17.6 L3.5,9.8 L1.6,7.4 Z" fill="#00763a"/>
  <path d="M4.4,1 L4.4,17.4" stroke="#4aa372" stroke-width="0.8"/>
  <path d="M11.6,0.6 L13.4,0.6 L13.4,7.6 L15.4,8.6 L16.4,16.2 L14.6,17.6 L12.5,16.6 L10.4,17.6 L8.6,16.2 L9.6,8.6 L11.6,7.6 Z" fill="#00763a"/>
  <path d="M12.5,1 L12.5,17.2" stroke="#4aa372" stroke-width="0.8"/>
 </g>
 <g id="shovel">
  <path d="M1.6,11 C2.8,9.9 4.3,10.2 5.2,11.6 L9.2,13.6 C8.4,16.2 6.3,18.2 2.6,18 C0.9,17.4 0.6,13.4 1.6,11 Z" fill="#2e0f0a"/>
  <path d="M5.4,12.6 L10.2,5.4" stroke="#3a1812" stroke-width="1.05" fill="none"/>
  <path d="M9.3,0.6 L14.5,3.1 L10.3,5.6 Z" fill="none" stroke="#3a1812" stroke-width="1.15" stroke-linejoin="round"/>
 </g>
</defs></svg>

</body></html>
